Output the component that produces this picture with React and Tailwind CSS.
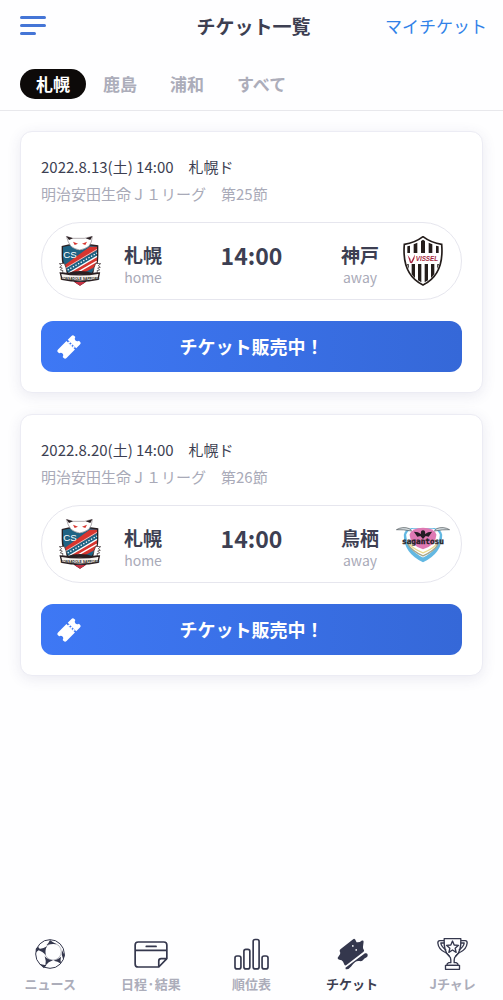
const HOME_CLUBS = ['札幌', '鹿島', '浦和', 'すべて'];

function SapporoCrest() {
  return (
    <svg viewBox="0 0 126 150" className="h-[50px] w-[42px]" role="img" aria-label="札幌">
      <path d="M8 30 L34 24 L90 24 L118 28 L118 62 Q118 118 63 149 Q8 118 8 62 Z" fill="#2a1f22" />
      <path d="M12 33 L36 28 L90 28 L114 32 L114 62 Q112 112 63 143 Q14 112 12 62 Z" fill="#1f6384" />
      <path d="M46 66 L92 32 L114 32 L114 42 L20 97 L16 88 Z" fill="#d8352f" />
      <path d="M19 97 L114 40" stroke="#fff" strokeWidth="2" fill="none" />
      <path d="M26 102 L114 51" stroke="#fff" strokeWidth="4" strokeDasharray="4 5" />
      <path d="M30 112 L114 62 L113 90 L46 126 Z" fill="#d8352f" />
      <path d="M29 111 L114 61 M50 112 L113 76" stroke="#fff" strokeWidth="4" />
      <path d="M22 1 L42 7 L76 7 L100 1 L97 18 Q92 34 76 38 Q62 46 48 38 Q34 34 28 18 Z" fill="#fff" stroke="#8c8488" strokeWidth="2" />
      <path d="M22 1 L42 7 L30 12 Z M100 1 L80 7 L94 12 Z" fill="#2a1f22" />
      <path d="M42 17 L57 23 L47 27 Z M84 17 L69 23 L79 27 Z" fill="#d8352f" />
      <text x="13" y="67" fontSize="29" fontFamily="Liberation Sans, sans-serif" fill="#fff">CS</text>
      <path d="M1 83 L16 82 Q22 94 24 112 L10 110 L12 104 L4 102 L10 96 L2 94 L8 89 Z M125 83 L110 82 Q104 94 102 112 L116 110 L114 104 L122 102 L116 96 L124 94 L118 89 Z" fill="#fff" stroke="#2a1f22" strokeWidth="2" />
      <path d="M22 112 Q63 98 103 112 L98 118 Q63 112 28 118 Z" fill="#2a1f22" />
      <path d="M4 111 Q63 122 121 111 L117 130 Q63 141 9 130 Z" fill="#f6f2ee" stroke="#2a1f22" strokeWidth="4" />
      <text x="63" y="131" fontSize="10" fontWeight="700" textAnchor="middle" fontFamily="Liberation Sans, sans-serif" fill="#2a1f22">CONSADOLE SAPPORO</text>
      <path d="M46 138 L80 138 L63 149 Z" fill="#c83243" />
    </svg>
  );
}

function KobeCrest() {
  return (
    <svg viewBox="0 0 118 150" className="h-[50px] w-10" role="img" aria-label="神戸">
      <path d="M59 2 Q84 21 115 25 Q123 116 59 147 Q-5 116 3 25 Q34 21 59 2 Z" fill="#fff" stroke="#241d1b" strokeWidth="5" />
      <path d="M12 31 L20 29 V51 H12 Z M31 25 L42 20 V51 H31 Z M53 15 L59 11 L65 15 V51 H53 Z M76 20 L87 25 V51 H76 Z M98 29 L106 31 V51 H98 Z M11 84 H16 L17 100 Z M25 84 H35 V126 Q28 120 25 114 Z M44 84 H54 V139 L44 133 Z M64 84 H74 V133 L64 139 Z M83 84 H93 V114 Q90 120 83 126 Z M102 84 H107 L101 100 Z" fill="#241d1b" />
      <path d="M13 57 L21 68 L23 78 L29 67 L35 55 L33 68 L26 82 L20 80 Z" fill="#a51f3d" />
      <text x="37" y="76" fontSize="19" fontWeight="700" fontStyle="italic" fontFamily="Liberation Sans, sans-serif" fill="#a51f3d">VISSEL</text>
    </svg>
  );
}

function TosuCrest() {
  return (
    <svg viewBox="0 0 160 110" className="h-[37px] w-[54px]" role="img" aria-label="鳥栖">
      <path d="M23 26 Q26 10 46 6 H114 Q134 10 137 26 Q138 80 80 108 Q22 80 23 26 Z" fill="#63b8e2" />
      <path d="M30 26 Q34 12 50 8 H110 Q126 12 130 26 Q128 70 80 94 Q32 70 30 26 Z" fill="#fff" />
      <path d="M35 54 Q46 74 80 89 Q114 74 125 54" fill="none" stroke="#a7a68c" strokeWidth="4" />
      <path d="M40 54 Q52 69 80 80 Q108 69 120 54" fill="none" stroke="#e9d98c" strokeWidth="4" />
      <path d="M40 26 Q46 5 80 5 Q114 5 120 26 Q118 58 80 69 Q42 58 40 26 Z" fill="#df79b3" />
      <path d="M1 11 Q20 0 40 8 L46 15 Q22 10 1 11 Z M159 11 Q140 0 120 8 L114 15 Q138 10 159 11 Z" fill="#d5dcdf" stroke="#4b5458" strokeWidth="2" />
      <path d="M53 17 Q66 17 74 24 Q72 14 80 13 Q88 14 86 24 Q94 17 107 17 L97 32 L88 30 L80 39 L72 30 L63 32 Z" fill="#251d25" />
      <text x="80" y="53" fontSize="23" fontWeight="700" textAnchor="middle" fontFamily="DejaVu Sans Mono, monospace" fill="#251d25" stroke="#251d25" strokeWidth="1">sagantosu</text>
    </svg>
  );
}

function SaleTicketIcon() {
  return (
    <svg viewBox="0 0 24 24" className="size-6" aria-hidden="true">
      <g transform="rotate(-45 12 12)" fill="#fff">
        <path d="M2.5 6 H14.4 V18 H2.5 Q.5 18 .5 16 V14.5 Q2.8 14 2.8 12 Q2.8 10 .5 9.5 V8 Q.5 6 2.5 6 Z" />
        <path d="M16.2 6 H21.5 Q23.5 6 23.5 8 V9.5 Q21.2 10 21.2 12 Q21.2 14 23.5 14.5 V16 Q23.5 18 21.5 18 H16.2 Z" />
        <path d="M15.3 8 V17" stroke="#fff" strokeWidth="2" strokeDasharray="1.8 1.4" />
      </g>
    </svg>
  );
}

function BallIcon() {
  return (
    <svg viewBox="0 0 90 90" className="size-[30px]" aria-hidden="true">
      <circle cx="45" cy="45" r="43" fill="none" stroke="#34374d" strokeWidth="3" />
      <circle cx="54" cy="38" r="25" fill="none" stroke="#34374d" strokeWidth="1" />
      <path d="M45 3 Q53 10 65 16 Q50 13 34 19 Q42 11 45 3 Z M2 30 L9 23 L14 29 Q24 30 36 22 Q28 34 33 48 Q22 38 11 34 L3 40 Z M29 52 Q38 62 54 64 Q40 68 31 80 Q34 64 29 52 Z M56 65 Q69 62 78 53 Q75 64 78 74 Q68 67 56 65 Z M81 33 Q84 43 90 48 L85 62 Q78 48 81 33 Z M13 75 L34 79 L27 88 Z" fill="#34374d" />
    </svg>
  );
}

function CalendarIcon() {
  return (
    <svg viewBox="0 0 100 80" className="h-[27px] w-[34px]" fill="none" stroke="#34374d" strokeWidth="5" strokeLinejoin="round" strokeLinecap="round" aria-hidden="true">
      <path d="M97 52 V12 Q97 3 88 3 H12 Q3 3 3 12 V68 Q3 77 12 77 H73 L97 52 H80 Q73 52 73 59 V77 M3 28 H97 M36 16 H65" />
    </svg>
  );
}

function RankingIcon() {
  return (
    <svg viewBox="0 0 106 96" className="h-8 w-[35px]" fill="none" stroke="#34374d" strokeWidth="5" aria-hidden="true">
      <rect x="3" y="54" width="18" height="39" rx="6" />
      <rect x="30" y="34" width="18" height="59" rx="6" />
      <rect x="58" y="4" width="18" height="89" rx="6" />
      <rect x="85" y="54" width="18" height="39" rx="6" />
    </svg>
  );
}

function TicketsIcon() {
  return (
    <svg viewBox="0 0 92 94" className="h-8 w-[31px]" fill="#34374d" aria-hidden="true">
      <path d="M48 3 Q51 0 54 4 L58 12 Q66 14 74 7 Q79 6 79 11 L77 26 Q77 32 80 35 Q82 38 78 41 L28 80 Q24 83 22 79 L18 70 Q15 64 7 64 Q1 63 2 58 L9 48 Q11 43 8 39 Q7 35 11 32 Z" />
      <path d="M25 88 L83 45 Q91 43 91 49 Q92 54 88 57 Q81 60 76 66 Q73 69 67 68 Q60 66 54 71 Q47 77 42 84 Q34 94 26 92 Z" />
      <circle cx="47" cy="23" r="2.5" fill="#fff" />
      <circle cx="57" cy="35" r="2.5" fill="#fff" />
    </svg>
  );
}

function TrophyIcon() {
  return (
    <svg viewBox="0 0 92 96" className="h-8 w-[31px]" fill="none" stroke="#34374d" strokeWidth="4" strokeLinejoin="round" aria-hidden="true">
      <path d="M21 2 H71 Q73 40 56 54 Q51 58 51 66 V74 H57 Q63 76 63 82 H29 Q29 76 35 74 H41 V66 Q41 58 36 54 Q19 40 21 2 Z" />
      <path d="M21 8 H8 Q2 8 2 15 Q4 33 22 42 Q30 45 37 55 M71 8 H84 Q90 8 90 15 Q88 33 70 42 Q62 45 55 55" />
      <path d="M22 15 H11 Q12 26 27 36 M70 15 H81 Q80 26 65 36" />
      <path d="M46 9 L51 21 L64 22 L54 31 L57 43 L46 36 L35 43 L38 31 L28 22 L41 21 Z" />
      <rect x="25" y="82" width="42" height="12" />
    </svg>
  );
}

const MATCHES = [
  { date: '2022.8.13(土) 14:00　札幌ド', league: '明治安田生命Ｊ１リーグ　第25節', time: '14:00', away: '神戸', Crest: KobeCrest },
  { date: '2022.8.20(土) 14:00　札幌ド', league: '明治安田生命Ｊ１リーグ　第26節', time: '14:00', away: '鳥栖', Crest: TosuCrest },
];

const NAV_ITEMS = [
  { label: 'ニュース', Icon: BallIcon },
  { label: '日程·結果', Icon: CalendarIcon },
  { label: '順位表', Icon: RankingIcon },
  { label: 'チケット', Icon: TicketsIcon, current: true },
  { label: 'Jチャレ', Icon: TrophyIcon },
];

function Team({ name, side }) {
  return (
    <div className="flex flex-col items-center pt-2">
      <span className="text-[19px] leading-6 font-bold">{name}</span>
      <span className="text-[14px] leading-5 text-[#a9aab8]">{side}</span>
    </div>
  );
}

function MatchCard({ match }) {
  const { Crest } = match;
  return (
    <article className="rounded-xl border border-[#ececf4] bg-white p-5 shadow-[0_3px_14px_rgba(60,60,120,0.10)]">
      <h2 className="mt-0.5 text-[15px] leading-[26px] font-normal">{match.date}</h2>
      <p className="text-[15px] leading-[27px] text-[#a9aab8]">{match.league}</p>
      <div className="mt-[15px] grid h-[78px] grid-cols-[1fr_auto_1fr] items-center rounded-full border border-[#e6e6ee] px-[11px]">
        <div className="flex items-center gap-[17px]">
          <div className="flex w-[54px] justify-center"><SapporoCrest /></div>
          <Team name="札幌" side="home" />
        </div>
        <span className="pb-3 text-[23px] leading-7 font-bold">{match.time}</span>
        <div className="flex items-center justify-end gap-[17px]">
          <Team name={match.away} side="away" />
          <div className="flex w-[54px] justify-center"><Crest /></div>
        </div>
      </div>
      <button type="button" className="relative mt-[21px] flex h-[51px] w-full items-center justify-center rounded-xl bg-linear-to-r from-[#3e78f5] to-[#3568d8] text-[18px] font-bold text-white">
        <span className="absolute left-4"><SaleTicketIcon /></span>
        チケット販売中！
      </button>
    </article>
  );
}

export default function App() {
  return (
    <div className="flex min-h-screen flex-col bg-[#fefeff] font-['Noto_Sans_CJK_JP',sans-serif] text-[#3d3f52]">
      <header className="border-b border-[#e8e8ec] pb-[11px]">
        <div className="grid h-[52px] grid-cols-[1fr_auto_1fr] items-center pr-4 pl-5">
          <button type="button" aria-label="メニュー" className="flex w-fit flex-col gap-[5px] pb-0.5">
            <span className="h-[3px] w-[26px] rounded-full bg-[#4475d6]" />
            <span className="h-[3px] w-[26px] rounded-full bg-[#4475d6]" />
            <span className="h-[3px] w-4 rounded-full bg-[#4475d6]" />
          </button>
          <h1 className="text-[19px] leading-7 font-bold">チケット一覧</h1>
          <a href="#my-tickets" className="justify-self-end text-[17px] leading-7 text-[#3182e8]">マイチケット</a>
        </div>
        <div className="mt-[17px] flex gap-px px-5">
          {HOME_CLUBS.map((club, i) => (
            <button
              key={club}
              type="button"
              aria-pressed={i === 0}
              className={`h-[30px] rounded-full px-4 text-[17px] leading-7 font-bold ${i === 0 ? 'bg-[#0d0a09] text-white' : 'text-[#acadba]'}`}
            >
              {club}
            </button>
          ))}
        </div>
      </header>
      <main className="flex flex-col gap-[21px] px-5 py-5">
        {MATCHES.map((match) => <MatchCard key={match.date} match={match} />)}
      </main>
      <nav className="mt-auto grid grid-cols-5 pb-1">
        {NAV_ITEMS.map(({ label, Icon, current }) => (
          <a key={label} href="#nav" aria-current={current ? 'page' : undefined} className="flex flex-col items-center">
            <span className="flex h-8 items-center"><Icon /></span>
            <span className={`mt-0.5 text-[13px] leading-6 font-bold ${current ? '' : 'text-[#acadba]'}`}>{label}</span>
          </a>
        ))}
      </nav>
    </div>
  );
}
